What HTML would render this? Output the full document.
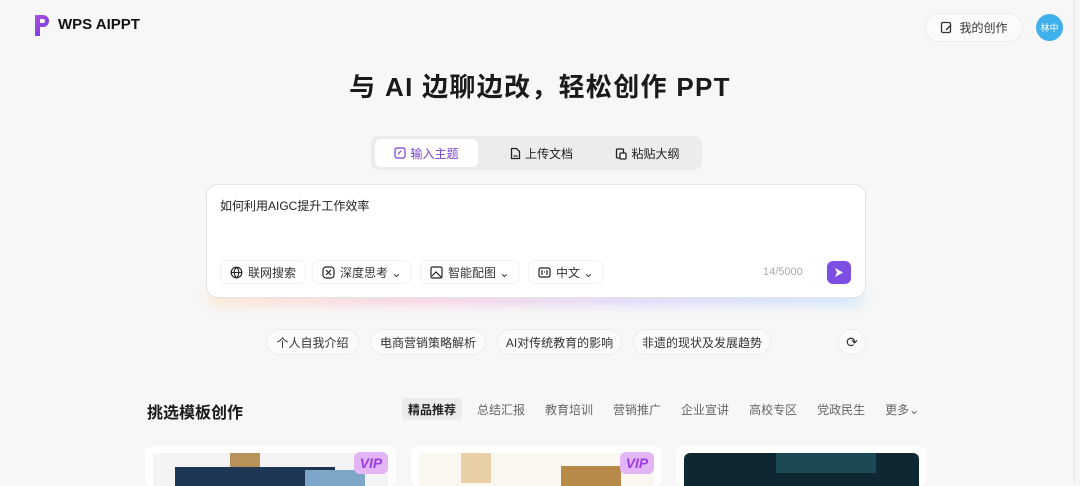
<!DOCTYPE html><html><head><meta charset="utf-8"><style>
*{box-sizing:border-box;margin:0;padding:0}
body{width:1080px;height:483px;overflow:hidden;background:#f7f7f7;font-family:"Liberation Sans","Noto Sans CJK SC",sans-serif;color:#222;position:relative}
.a{position:absolute}
.f{display:flex;align-items:center}
.pill{position:absolute;height:26px;border:1px solid #ececec;border-radius:13px;background:#fbfbfb;font-size:12px;color:#333;display:flex;align-items:center;justify-content:center}
.tool{position:absolute;top:260px;height:24px;font-size:12px;color:#333;display:flex;align-items:center;gap:5px;padding:0 9px;border:1px solid #f3f3f3;border-radius:6px}
.cat{font-size:12px;color:#666}
.card{position:absolute;top:446px;width:251px;height:40px;background:#fff;border-radius:8px;overflow:hidden}
.vip{position:absolute;right:8px;top:6px;width:34px;height:22px;background:#e3b5f5;border-radius:6px;color:#9b3de0;font-weight:bold;font-style:italic;font-size:14px;display:flex;align-items:center;justify-content:center}
</style></head><body>
<svg class="a" style="left:33px;top:14px" width="18" height="23" viewBox="0 0 18 23"><defs><linearGradient id="g" x1="0" y1="0" x2="1" y2="1"><stop offset="0" stop-color="#b04de0"/><stop offset="1" stop-color="#6a3be0"/></linearGradient></defs><path d="M2 1h8a6 6 0 0 1 0 12H7v9H2z" fill="url(#g)"/><path d="M7 5h3a2 2 0 0 1 0 4H7z" fill="#f7f7f7"/></svg>
<div class="a" style="left:58px;top:16px;font-size:15px;font-weight:bold;color:#111">WPS AIPPT</div>
<div class="pill" style="left:925px;top:13px;width:98px;height:29px;border-radius:15px;gap:6px;font-size:12px"><svg width="13" height="13" viewBox="0 0 13 13"><rect x="1.5" y="1.5" width="9" height="10" rx="1.5" fill="none" stroke="#333" stroke-width="1.3"/><path d="M6 9l5-5" stroke="#333" stroke-width="1.3"/></svg>我的创作</div>
<div class="a f" style="left:1036px;top:14px;width:27px;height:27px;border-radius:50%;background:#3fb0ea;color:#fff;font-size:9px;justify-content:center">林中</div>
<div class="a" style="left:1074px;top:0;width:1px;height:483px;background:#e5e5e5"></div>
<div class="a" style="left:0;width:1080px;top:67px;text-align:center;font-size:26px;font-weight:bold;color:#1a1a1a;letter-spacing:1.3px">与 AI 边聊边改，轻松创作 PPT</div>
<div class="a" style="left:371px;top:136px;width:331px;height:34px;background:#ececec;border-radius:8px"></div>
<div class="a f" style="left:375px;top:139px;width:103px;height:28px;background:#fff;border-radius:6px;justify-content:center;font-size:12px;color:#7a3fd6;gap:4px"><svg width="12" height="12"><rect x="1" y="1" width="10" height="10" rx="2" fill="none" stroke="#7a3fd6" stroke-width="1.2"/><path d="M4 7l3-3" stroke="#7a3fd6" stroke-width="1.2"/></svg>输入主题</div>
<div class="a f" style="left:490px;top:139px;width:103px;height:28px;justify-content:center;font-size:12px;color:#222;gap:4px"><svg width="11" height="13"><path d="M1.5 1.5h5l3 3v7h-8z" fill="none" stroke="#222" stroke-width="1.3"/><path d="M3.5 9h4" stroke="#222" stroke-width="1.2"/></svg>上传文档</div>
<div class="a f" style="left:596px;top:139px;width:103px;height:28px;justify-content:center;font-size:12px;color:#222;gap:4px"><svg width="12" height="13"><rect x="1.5" y="2" width="7" height="9" rx="1" fill="none" stroke="#222" stroke-width="1.3"/><rect x="5" y="6" width="6" height="6" rx="1" fill="#fff" stroke="#222" stroke-width="1.3"/></svg>粘贴大纲</div>
<div class="a" style="left:210px;top:292px;width:652px;height:12px;background:linear-gradient(90deg,#fde4c8,#f8c8e0,#d9d0fb,#c8e6fb);filter:blur(6px)"></div>
<div class="a" style="left:206px;top:184px;width:660px;height:114px;background:#fff;border:1px solid #e3e3e3;border-radius:12px"></div>
<div class="a" style="left:220px;top:197px;font-size:12px;color:#222">如何利用AIGC提升工作效率</div>
<div class="tool" style="left:220px"><svg width="13" height="13"><circle cx="6.5" cy="6.5" r="5.3" fill="none" stroke="#222" stroke-width="1.2"/><path d="M1.2 6.5h10.6M6.5 1.2c-3 3-3 7.6 0 10.6M6.5 1.2c3 3 3 7.6 0 10.6" fill="none" stroke="#222" stroke-width="1.1"/></svg>联网搜索</div>
<div class="tool" style="left:312px"><svg width="13" height="13"><rect x="1" y="1" width="11" height="11" rx="3" fill="none" stroke="#222" stroke-width="1.2"/><path d="M4 4l5 5M9 4l-5 5" stroke="#222" stroke-width="1.2"/></svg>深度思考 ⌄</div>
<div class="tool" style="left:420px"><svg width="13" height="13"><rect x="1" y="1" width="11" height="11" rx="1.5" fill="none" stroke="#222" stroke-width="1.2"/><path d="M2 10l4-4 5 5" fill="none" stroke="#222" stroke-width="1.2"/></svg>智能配图 ⌄</div>
<div class="tool" style="left:528px"><svg width="13" height="13"><rect x="1" y="2" width="11" height="9" rx="1.5" fill="none" stroke="#222" stroke-width="1.2"/><path d="M4 4v5M9 4v5M6 6h1" stroke="#222" stroke-width="1.2"/></svg>中文 ⌄</div>
<div class="a" style="left:763px;top:266px;font-size:11px;color:#aaa">14/5000</div>
<div class="a f" style="left:827px;top:261px;width:24px;height:23px;background:#7d4ee3;border-radius:6px;justify-content:center"><svg width="10" height="11"><path d="M1 1l8 4.5-8 4.5 2-4.5z" fill="#fff"/></svg></div>
<div class="pill" style="left:266px;top:329px;width:93px">个人自我介绍</div>
<div class="pill" style="left:370px;top:329px;width:116px">电商营销策略解析</div>
<div class="pill" style="left:497px;top:329px;width:125px">AI对传统教育的影响</div>
<div class="pill" style="left:633px;top:329px;width:138px">非遗的现状及发展趋势</div>
<div class="pill" style="left:838px;top:329px;width:28px;font-size:14px">⟳</div>
<div class="a" style="left:147px;top:399px;font-size:16px;font-weight:bold;color:#1a1a1a">挑选模板创作</div>
<div class="a f" style="left:402px;top:398px;width:60px;height:22px;background:#ebebeb;border-radius:4px;justify-content:center;font-size:12px;font-weight:bold;color:#222">精品推荐</div>
<div class="a f cat" style="left:477px;top:398px;height:22px;gap:20px"><span>总结汇报</span><span>教育培训</span><span>营销推广</span><span>企业宣讲</span><span>高校专区</span><span>党政民生</span><span>更多⌄</span></div>
<div class="card" style="left:145px"><div class="a" style="left:8px;top:7px;width:235px;height:40px;background:#f4f4f4"></div><div class="a" style="left:85px;top:7px;width:30px;height:30px;background:#b9925a"></div><div class="a" style="left:30px;top:21px;width:160px;height:30px;background:#1d3653"></div><div class="a" style="left:160px;top:24px;width:60px;height:30px;background:#7ea6c9"></div><div class="vip">VIP</div></div>
<div class="card" style="left:411px"><div class="a" style="left:8px;top:7px;width:235px;height:40px;background:#faf6f0"></div><div class="a" style="left:50px;top:7px;width:30px;height:30px;background:#e8cfa6"></div><div class="a" style="left:150px;top:20px;width:60px;height:30px;background:#b88a4a"></div><div class="vip">VIP</div></div>
<div class="card" style="left:676px"><div class="a" style="left:8px;top:7px;width:235px;height:40px;background:#0f2730;border-radius:6px"></div><div class="a" style="left:100px;top:7px;width:100px;height:20px;background:#1b4a55"></div></div>
</body></html>
